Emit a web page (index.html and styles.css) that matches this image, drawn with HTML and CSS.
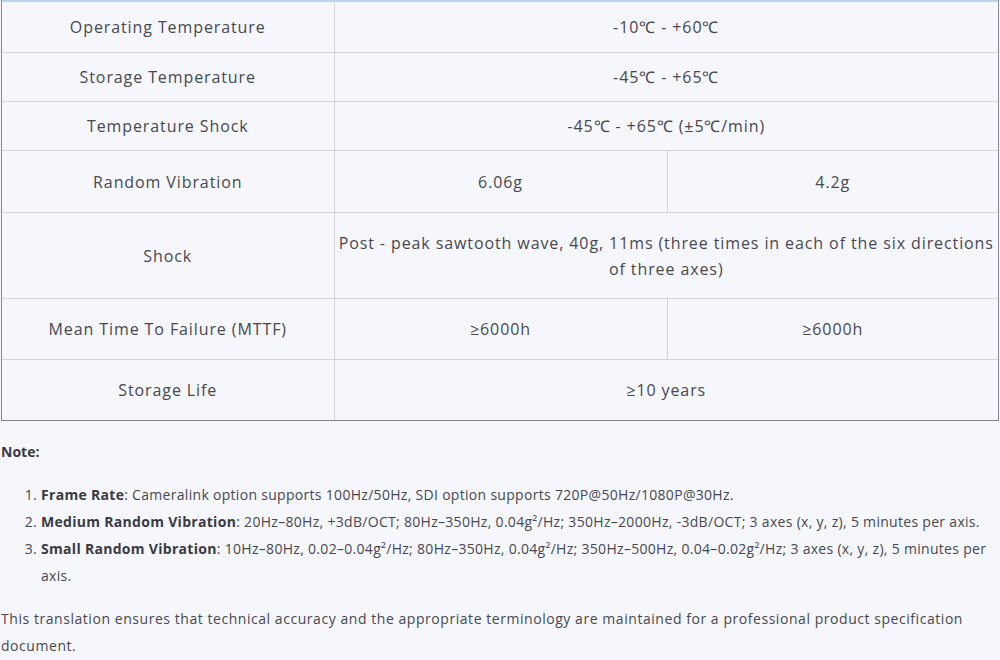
FILE: index.html
```html
<!DOCTYPE html>
<html lang="en">
<head>
<meta charset="utf-8">
<title>Specifications</title>
<link rel="stylesheet" href="styles.css">
</head>
<body>
<div class="page">
  <div class="table-wrap">
    <div class="head-edge"></div>
    <table class="spec">
      <colgroup>
        <col class="c1">
        <col class="c2">
        <col class="c3">
      </colgroup>
      <tbody>
        <tr class="r-first"><td>Operating Temperature</td><td colspan="2">-10℃ - +60℃</td></tr>
        <tr class="r-short"><td>Storage Temperature</td><td colspan="2">-45℃ - +65℃</td></tr>
        <tr class="r-short"><td>Temperature Shock</td><td colspan="2">-45℃ - +65℃ (±5℃/min)</td></tr>
        <tr class="r-vib"><td>Random Vibration</td><td>6.06g</td><td>4.2g</td></tr>
        <tr class="r-tall"><td>Shock</td><td colspan="2">Post - peak sawtooth wave, 40g, 11ms (three times in each of the six directions of three axes)</td></tr>
        <tr class="r-mid"><td>Mean Time To Failure (MTTF)</td><td>≥6000h</td><td>≥6000h</td></tr>
        <tr class="r-mid"><td>Storage Life</td><td colspan="2">≥10 years</td></tr>
      </tbody>
    </table>
  </div>
  <p class="note"><strong>Note:</strong></p>
  <ol class="notes">
    <li><strong>Frame Rate</strong>: Cameralink option supports 100Hz/50Hz, SDI option supports 720P@50Hz/1080P@30Hz.</li>
    <li><strong>Medium Random Vibration</strong>: 20Hz–80Hz, +3dB/OCT; 80Hz–350Hz, 0.04g²/Hz; 350Hz–2000Hz, -3dB/OCT; 3 axes (x, y, z), 5 minutes per axis.</li>
    <li><strong>Small Random Vibration</strong>: 10Hz–80Hz, 0.02–0.04g²/Hz; 80Hz–350Hz, 0.04g²/Hz; 350Hz–500Hz, 0.04–0.02g²/Hz; 3 axes (x, y, z), 5 minutes per axis.</li>
  </ol>
  <p class="closing">This translation ensures that technical accuracy and the appropriate terminology are maintained for a professional product specification document.</p>
</div>
</body>
</html>
```
FILE: styles.css
```css
html, body {
  margin: 0;
  padding: 0;
  background: #f6f7fc;
}
body {
  font-family: "Open Sans", "Liberation Sans", sans-serif;
  color: #48484f;
}
.page {
  padding: 0 1px 0 1px;
}
.table-wrap {
  width: 998px;
  border-left: 1px solid #8a8a96;
  border-right: 1px solid #8a8a96;
  border-bottom: 1px solid #80808c;
  box-sizing: border-box;
}
.head-edge {
  height: 2px;
  background: #bcd1ea;
}
.spec {
  width: 100%;
  border-collapse: collapse;
  table-layout: fixed;
  font-size: 16px;
  line-height: 26px;
  letter-spacing: 0.9px;
}
.spec col.c1 { width: 332px; }
.spec col.c2 { width: 333px; }
.spec td {
  border: 1px solid #d3d3da;
  text-align: center;
  vertical-align: middle;
  padding: 0 3px;
}
.spec tr:first-child td { border-top: none; }
.spec tr:last-child td { border-bottom: none; }
.spec td:first-child { border-left: none; }
.spec td:last-child { border-right: none; }
.spec tr.r-first td { height: 50px; }
.spec tr.r-short td { height: 48px; }
.spec tr.r-vib td { height: 61px; }
.spec tr.r-mid td { height: 60px; }
.spec tr.r-tall td { height: 85px; }

.note {
  margin: 17px 0 0 0;
  font-size: 14px;
  line-height: 27px;
  color: #3a3a42;
}
.note strong { font-weight: 700; }
.notes {
  margin: 16px 0 0 0;
  padding-left: 40px;
  font-size: 14px;
  line-height: 27px;
  letter-spacing: 0.3px;
}
.notes strong { color: #3a3a42; font-weight: 700; }
.closing {
  margin: 16px 0 0 0;
  font-size: 14px;
  line-height: 27px;
  letter-spacing: 0.55px;
}
```
